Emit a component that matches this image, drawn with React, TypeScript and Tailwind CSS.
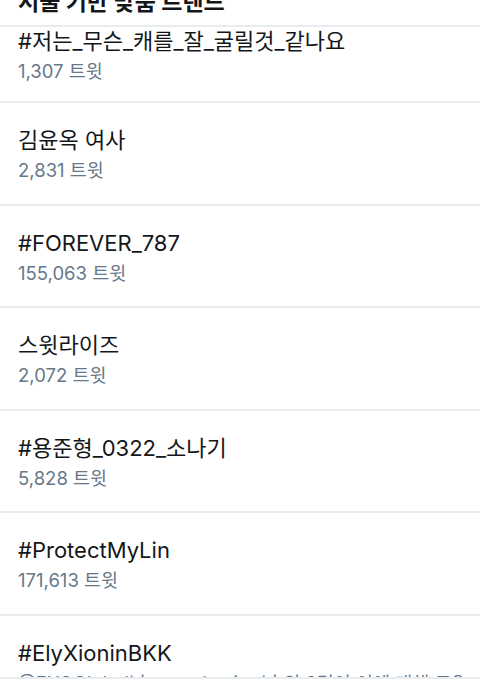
const trends = [
  { name: '#저는_무슨_캐를_잘_굴릴것_같나요', count: '1,307 트윗' },
  { name: '김윤옥 여사', count: '2,831 트윗' },
  { name: '#FOREVER_787', count: '155,063 트윗' },
  { name: '스윗라이즈', count: '2,072 트윗' },
  { name: '#용준형_0322_소나기', count: '5,828 트윗' },
  { name: '#ProtectMyLin', count: '171,613 트윗' },
  { name: '#ElyXioninBKK', count: '@EXOGlobal님, @andamiro 님 외 2명이 이에 대해 트윗함' },
];

function TrendRow({ name, count, first }: { name: string; count: string; first?: boolean }) {
  return (
    <div
      className={
        first
          ? 'h-[76px] border-b-2 border-[#e6ecf0] px-[18px] pt-0'
          : 'h-[102.5px] border-b-2 border-[#e6ecf0] px-[18px] pt-[23px]'
      }
    >
      <div className="text-[22px] leading-[28px] text-[#14171a] whitespace-nowrap">{name}</div>
      <div className="text-[18.5px] leading-[32px] text-[#66788a] whitespace-nowrap overflow-hidden">{count}</div>
    </div>
  );
}

export default function App() {
  return (
    <div
      className="relative h-[684px] w-[480px] overflow-hidden bg-white"
      style={{ fontFamily: 'Inter, "Noto Sans CJK KR", sans-serif' }}
    >
      {/* section header, scrolled mostly out of view */}
      <div className="flex h-[27px] flex-col justify-end overflow-hidden border-b-2 border-[#e6ecf0] px-[18px] pb-[8px]">
        <div className="shrink-0 text-[23px] font-bold leading-[30px] text-[#14171a]">서울 기반 맞춤 트렌드</div>
      </div>
      {trends.map((t, i) => (
        <TrendRow key={t.name} name={t.name} count={t.count} first={i === 0} />
      ))}
      <div className="absolute bottom-0 left-0 right-0 h-[7px] border-t-2 border-[#e6ecf0] bg-white" />
    </div>
  );
}
